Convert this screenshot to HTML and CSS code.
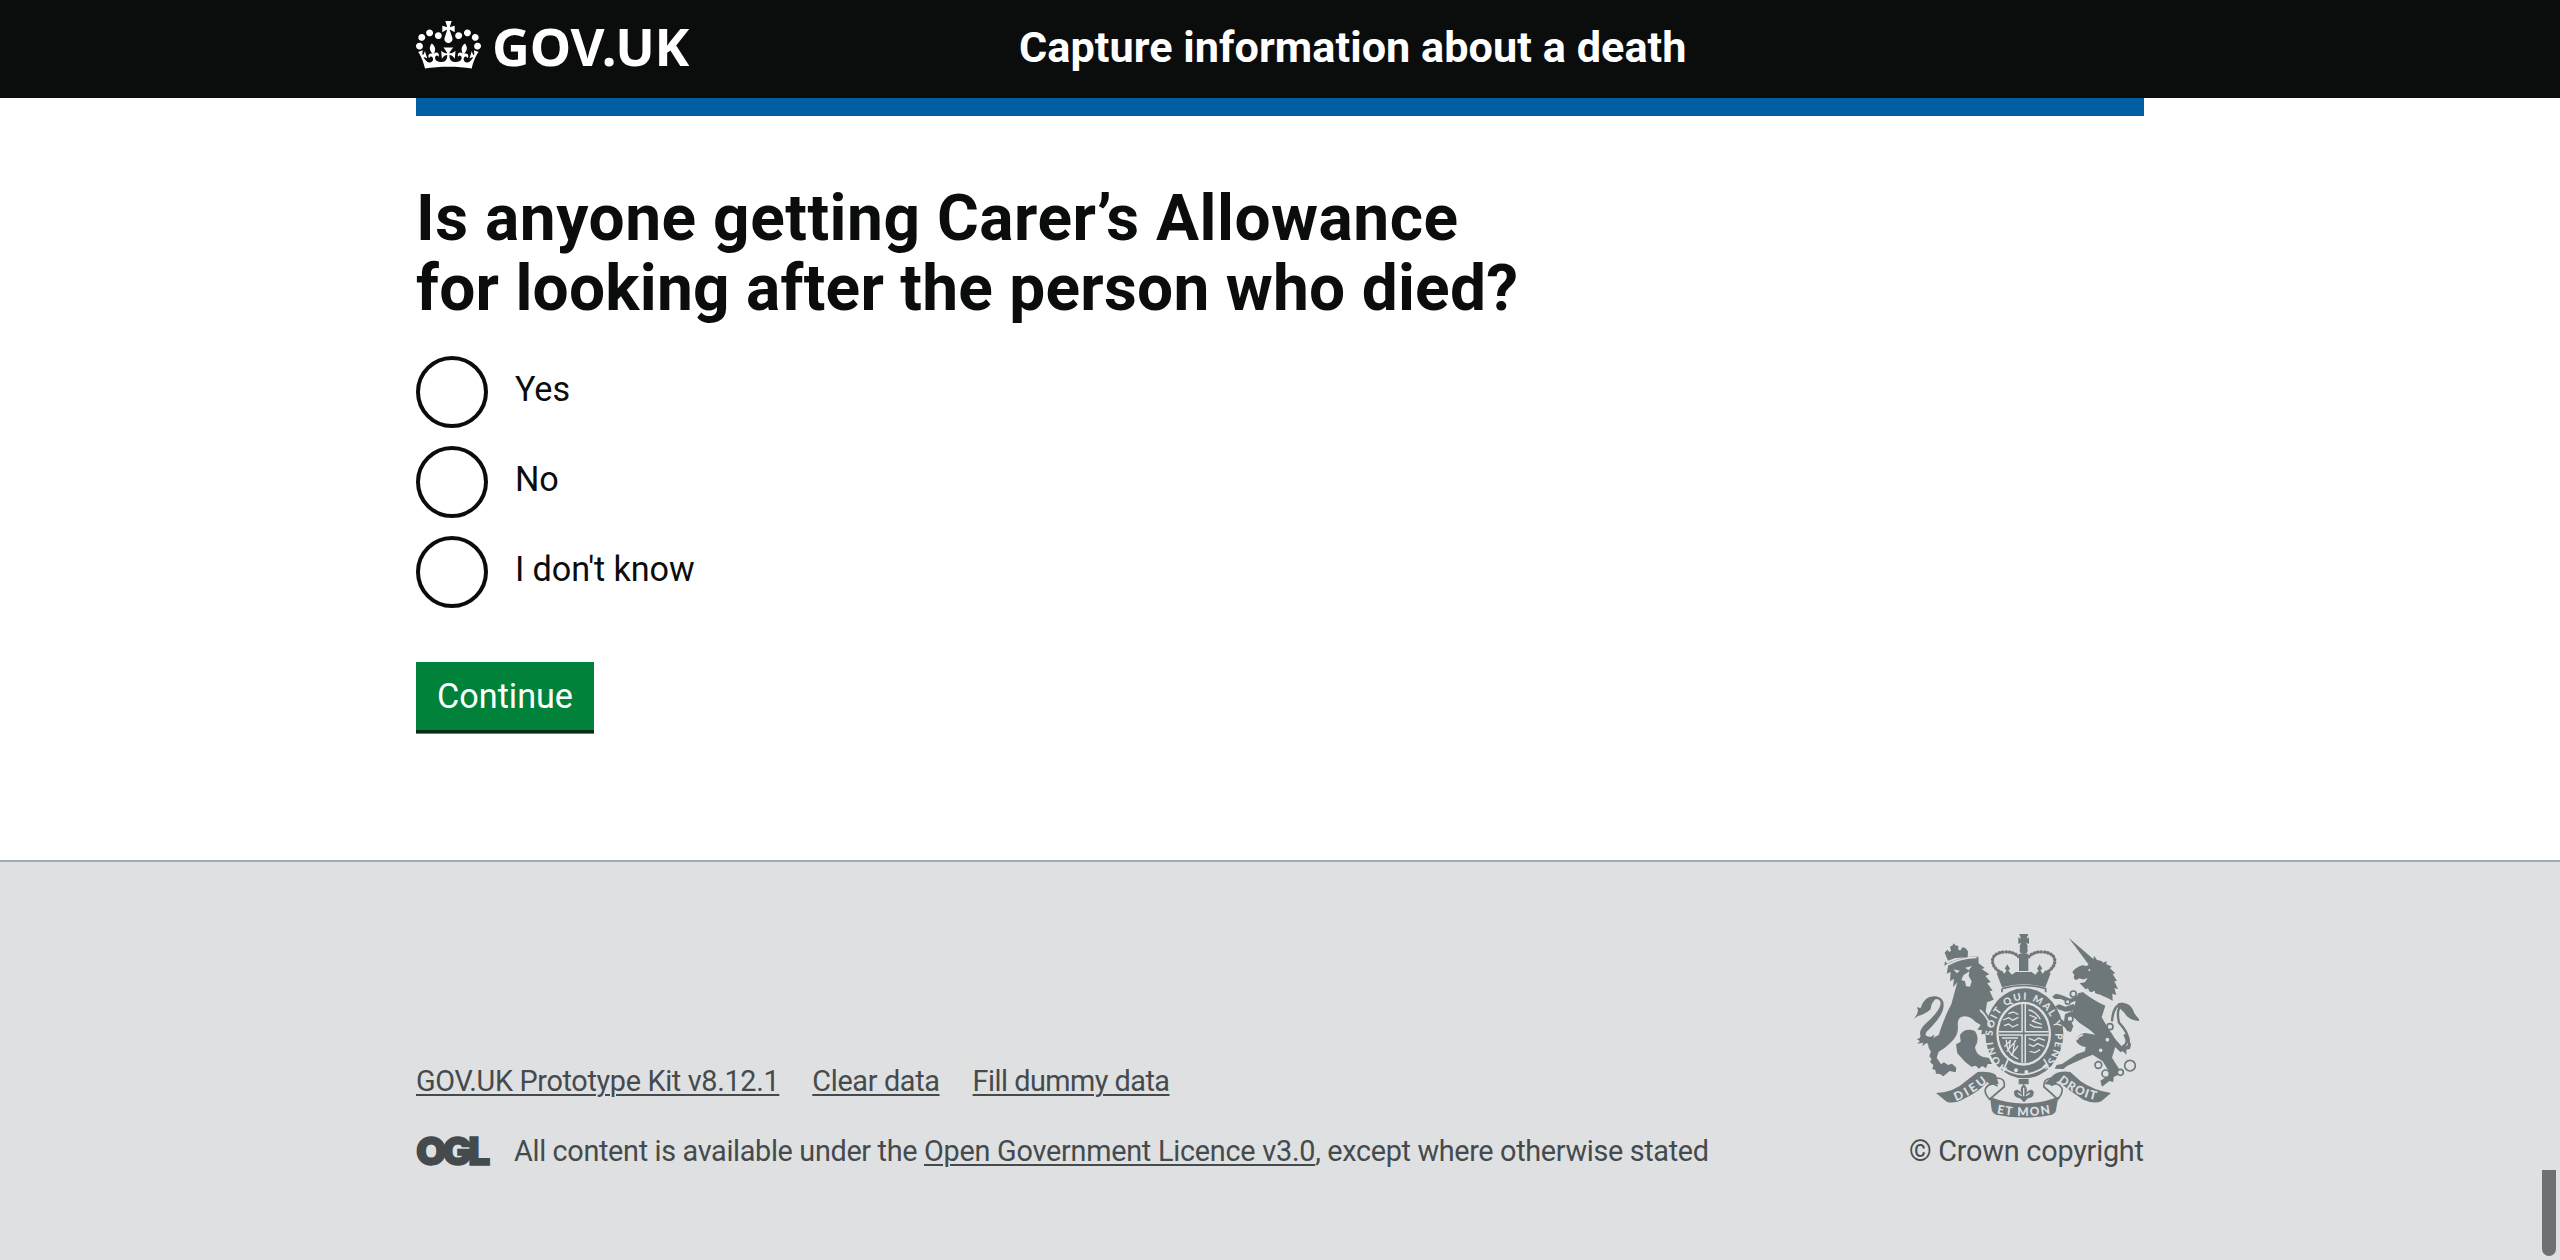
FILE: index.html
```
<!DOCTYPE html>
<html lang="en">
<head>
<meta charset="utf-8">
<title>Is anyone getting Carer’s Allowance for looking after the person who died?</title>
<link rel="stylesheet" href="styles.css">
</head>
<body>
<header class="header">
  <div class="container header-inner">
    <a class="logo" href="#">
      <svg class="crown" viewBox="0 0 132 97" aria-hidden="true"><path fill="currentColor" fill-rule="evenodd" d="M25 30.2c3.5 1.5 7.7-.2 9.1-3.7 1.5-3.6-.2-7.8-3.9-9.2-3.6-1.4-7.6.3-9.1 3.9-1.4 3.5.3 7.5 3.9 9zM9 39.5c3.6 1.5 7.8-.2 9.2-3.7 1.5-3.6-.2-7.8-3.9-9.1-3.6-1.5-7.6.2-9.1 3.8-1.4 3.5.3 7.5 3.8 9zM4.4 57.2c3.5 1.5 7.7-.2 9.1-3.8 1.5-3.6-.2-7.7-3.9-9.1-3.5-1.5-7.6.3-9.1 3.8-1.4 3.5.3 7.6 3.9 9.1zm38.3-21.4c3.5 1.5 7.7-.2 9.1-3.8 1.5-3.6-.2-7.7-3.9-9.1-3.6-1.5-7.6.3-9.1 3.8-1.3 3.6.4 7.7 3.9 9.1zm64.4-5.6c-3.6 1.5-7.8-.2-9.1-3.7-1.5-3.6.2-7.8 3.8-9.2 3.6-1.4 7.7.3 9.2 3.9 1.3 3.5-.4 7.5-3.9 9zm15.9 9.3c-3.6 1.5-7.7-.2-9.1-3.7-1.5-3.6.2-7.8 3.7-9.1 3.6-1.5 7.7.2 9.2 3.8 1.5 3.5-.3 7.5-3.8 9zm4.7 17.7c-3.6 1.5-7.8-.2-9.2-3.8-1.5-3.6.2-7.7 3.9-9.1 3.6-1.5 7.7.3 9.2 3.8 1.3 3.5-.4 7.6-3.9 9.1zM89.3 35.8c-3.6 1.5-7.8-.2-9.2-3.8-1.4-3.6.2-7.7 3.9-9.1 3.6-1.5 7.7.3 9.2 3.8 1.4 3.6-.3 7.7-3.9 9.1zM69.7 17.7l8.9 4.7V9.3l-8.9 2.8c-.2-.3-.5-.6-.9-.9L72.4 0H59.6l3.5 11.2c-.3.3-.6.5-.9.9l-8.8-2.8v13.1l8.8-4.7c.3.3.6.7.9.9l-5 15.4v.1c-.2.8-.4 1.6-.4 2.4 0 4.1 3.1 7.5 7 8.1h.2c.3 0 .7.1 1 .1.4 0 .7 0 1-.1h.2c4-.6 7.1-4.1 7.1-8.1 0-.8-.1-1.7-.4-2.4V34l-5.1-15.4c.4-.2.7-.6 1-.9zM66 92.8c16.9 0 32.8 1.1 47.1 3.2 4-16.9 8.9-26.7 14-33.5l-9.6-3.4c1 4.9 1.1 7.2 0 10.2-1.5-1.4-3-4.3-4.2-8.7L108.6 76c2.8-2 5-3.2 7.5-3.3-4.4 9.4-10 11.9-13.6 11.2-4.3-.8-6.3-4.6-5.6-7.9 1-4.7 5.7-5.9 8-.5 4.3-8.7-3-11.4-7.6-8.8 7.1-7.2 7.9-13.5 2.1-21.1-8 6.1-8.1 12.3-4.5 20.8-4.7-5.4-12.1-2.5-9.5 6.2 3.4-5.2 7.9-2 7.2 3.1-.6 4.3-6.4 7.8-13.5 7.2-10.3-.9-10.9-8-11.2-13.8 2.5-.5 7.1 1.8 11 7.3L80.2 60c-4.1 4.4-8 5.3-12.3 5.4 1.4-4.4 8-11.6 8-11.6H55.5s6.4 7.2 7.9 11.6c-4.2-.1-8-1-12.3-5.4l1.4 16.4c3.9-5.5 8.5-7.7 10.9-7.3-.3 5.8-.9 12.8-11.1 13.8-7.2.6-12.9-2.9-13.5-7.2-.7-5 3.8-8.3 7.1-3.1 2.7-8.7-4.6-11.6-9.4-6.2 3.7-8.5 3.6-14.7-4.6-20.8-5.8 7.6-5 13.9 2.2 21.1-4.7-2.6-11.9.1-7.7 8.8 2.3-5.5 7.1-4.2 8.1.5.7 3.3-1.3 7.1-5.7 7.9-3.5.7-9-1.8-13.5-11.2 2.5.1 4.7 1.3 7.5 3.3l-4.7-15.4c-1.2 4.4-2.7 7.2-4.3 8.7-1.1-3-.9-5.3 0-10.2l-9.5 3.4c5 6.9 9.9 16.7 14 33.5 14.8-2.1 30.8-3.2 47.7-3.2z"/></svg>
      <span class="logo-text">GOV.UK</span>
    </a>
    <a class="service" href="#">Capture information about a death</a>
  </div>
</header>
<div class="container bar"></div>
<main class="container main">
  <h1 class="heading">Is anyone getting Carer’s Allowance<br><span class="heading-rest">for looking after the person who died?</span></h1>
  <form class="form">
    <div class="radios">
      <label class="radio"><input class="radio-input" type="radio" name="carers"><span class="radio-label">Yes</span></label>
      <label class="radio"><input class="radio-input" type="radio" name="carers"><span class="radio-label">No</span></label>
      <label class="radio"><input class="radio-input" type="radio" name="carers"><span class="radio-label">I don't know</span></label>
    </div>
    <button class="button" type="button">Continue</button>
  </form>
</main>
<footer class="footer">
  <div class="container footer-inner">
    <div class="meta">
      <nav class="links">
        <a href="#">GOV.UK Prototype Kit v8.12.1</a>
        <a href="#">Clear data</a>
        <a class="tight" href="#">Fill dummy data</a>
      </nav>
      <div class="licence">
        <span class="ogl">OGL</span>
        <p class="licence-text">All content is available under the <a class="loose" href="#">Open Government Licence v3.0</a>, except where otherwise stated</p>
      </div>
    </div>
    <a class="copyright" href="#">
      <svg class="arms" viewBox="42 42 675 552" aria-hidden="true">
        <defs>
          <path id="motto" d="M324 446A94 111 0 1 1 424 443"/>
          <path id="dieu" d="M168 543Q215 526 266 483"/>
          <path id="mon" d="M290 580Q371 596 452 580"/>
          <path id="droit" d="M473 484Q525 528 590 541"/>
        </defs>
        <g class="ink">
          <!-- royal crown -->
          <path d="M358 42h27l-6 14 8-4v20l-8-4 5 14h-26l5-14-8 4V52l8 4z"/>
          <circle cx="371" cy="90" r="12"/>
          <path d="M357 101h28v52h-28z"/>
          <path d="M290 160l14-9 9 10 7-10-6-5 8-13 8 13-5 6 11 12 11-8h48l11 8 10-12-5-6 8-13 8 13-6 5 7 10 9-10 15 9-16 42q-66-18-130 0z"/>
          <path class="line dots" d="M304 158C268 140 266 98 314 96Q342 94 358 112"/>
          <path class="line dots" d="M438 158C474 140 476 98 428 96Q400 94 385 112"/>
          <path class="line" d="M306 206Q371 187 437 206v11M306 206v11"/>
          <!-- lion -->
          <path d="M144 122l-10-24 8-9 6 7 5-4-3-12 8-4 3-6 5 6 9 2 0 12 7 1 5-9 9 2 8 10-1 20q-32-6-59 8z"/>
          <path d="M133 137Q178 108 235 110l1 20 18 14-9 3 23 16-12 5 16 18-10 4 16 22-9 1 12 26-20 8-4 28 17 26 12 52-12-8-9 6-9-10-12 2 2-13-14-1 10-14-15-9q-16-18-34-17-19 1-20 23 4 26-11 45-24 27-46 38l-6 18 13 20 9-6 12 8 12-4 13 12-2 14-18-4-19 16-10-7-12-1-2-11-9-3 3-12-10-9 5-9-7-8 5-14-8-13q3-26 31-37 20-61 38-92l18-66-13 15 3-26-12 8 2-28-12 5 5-26-10-12z"/>
          <path d="M180 345q15-24 45-12 16 24 0 48 2 22 22 29l20 4 9 18-13 0-5 13-11-7-11 8-8-9-14 3-19-15-23-25-4-27 14-8z"/>
          <path d="M42 296q12-13 12-25l-3-9 11 2q11-38 45-35 25 4 24 28-1 30-50 77-12 15 10 17l12-7-5 20-12 14-5-10-15 11 4-11-18 3 8-8-10-5q14-3 11-13-5-15 18-36 40-36 43-58 0-14-15-14-14 12-15 31-18 16-38 20z"/>
          <!-- unicorn -->
          <path d="M506 53l78 68-17 14z"/>
          <path d="M560 138l19-15 3-16 9 13q16 2 18 8l11-4-1 9 17 7-7 4 17 16-8 2 13 21-8 0 11 25-11-4 6 21-12-4 1 21q-34-19-76-29l-23-23 16-3 8-14q-14 8-24 2l-11 5q-10-4-5-15l-6-9q10-14 29-20z"/>
          <path d="M534 220l20-5q28 27 62 42l-11 35 24 40q20 22 17 48l-10 33 20 32-4 21-11 5-1 15-12-3-22 17-5-18 19-12 6-17-18-29-30-20-25 10-51 23-12 10-26-1 6-11 16-3 45-30 24-8 2-13q-22-3-28-17 0-21 27-25l30 5-16-14-32-22-23-22z"/>
          <path d="M532 241l-22 8-28-12-17 0-9-7 12-9 16 4 27 11 20-8zM533 270l-36 5-23-7-8-9 11-6 19 7 24-8zM527 285l-19 8 12 26-7 17-11-3-8-11-26-19 1-22 8 11 15 12 3-21 21-10z"/>
          <path class="line tail" d="M636 304Q639 254 668 251 647 264 657 308 692 344 686 379M668 379q21-9 5-36"/>
          <path d="M654 250q37-8 49 30l14 18v5q-31-2-44-25-10-12-19-15zM640 350l24 28 15 0 15-9-4 18-11 2 0 15-10-10-8 2-18-17z"/>
          <ellipse cx="373" cy="340" rx="117" ry="135"/>
          <!-- fleur-de-lis -->
          <path d="M356 477h30v16h-30zM371 492q16 15 6 28 16-19 24-5 2 18-17 20l-12 12-12-12q-19-2-18-20 8-14 24 5-10-13 5-28z"/>
          <!-- ribbons -->
          <path d="M108 519q52 0 93-38l32-25q38-3 55 9l8 27-26 4-8-11q-23 29-70 51-30 17-52 9z"/>
          <path d="M633 519q-51-7-91-35l-31-28q-30-5-50 8l-28 28 26 4 15-12q39 32 76 55 35 15 55 4z"/>
          <path d="M270 531q101 39 205-1l-6 34q0 15-13 20-85 17-168 0-13-4-14-22z"/>
        </g>
        <path class="line" d="M289 474q29 0 23 27-17 14-43 37-18-19-12-33 13-22 36-7M455 474q-26 2-23 27 17 14 41 37 16-18 13-33-13-22-34-8"/>
        <!-- lion and unicorn details -->
        <g class="paper">
          <path d="M160 148l19 4-8 8zM196 143l20-5-10 13zM190 166l18-12-2 14 9 16-5 16-12-1-3-15-11-4z"/>
          <circle cx="568" cy="150" r="3"/>
        </g>
        <path class="cut" d="M540 205q32 30 78 49M548 204l4 10 11-6 6 17 13-10 4 20 15-9 2 20"/>
        <path class="cut" d="M144 134Q180 113 230 112"/>
        <path class="cut" d="M240 270q23 20 31 49M549 345q-15 4-18 14"/>
        <!-- garter -->
        <ellipse class="paper" cx="371" cy="341" rx="82" ry="96"/>
        <ellipse class="ink" cx="371" cy="341" rx="75" ry="89"/>
        <path class="cut wide" d="M371 252v176M297 340h149"/>
        <path class="line" d="M371 252v176M297 340h149"/>
        <path class="cut fine" d="M309 300l18-7 10 8 18-9M312 317l14-5 12 9 17-8M325 281l15-5 15 7M385 270q21 2 36 28M388 285l22 9-13 9 28 10M389 313l14 8 23 2M386 355l18 7 11-8 20 7M386 373l14 6 13-8 20 9M389 394l16 4 15-9M306 354h48M319 359q-1 42 36 58M331 360l-4 28M344 362l-6 42M313 380l20-20M320 395l28-34M333 407l21-30"/>
        <path class="cut" d="M304 440q63 48 135-2M324 418l-14 34M431 417l14 22"/>
        <g class="paper"><circle cx="348" cy="451" r="6"/><circle cx="379" cy="456" r="6"/></g>
        <path class="cut fine" d="M371 503v26M354 519l11 8M389 519l-11 8"/>
        <g class="rings">
          <circle cx="520" cy="222" r="9"/><circle cx="503" cy="245" r="7"/><circle cx="510" cy="296" r="9"/><circle cx="630" cy="320" r="9"/><circle cx="622" cy="359" r="8"/><circle cx="602" cy="391" r="8"/><circle cx="595" cy="435" r="10"/><circle cx="617" cy="461" r="11"/><circle cx="661" cy="457" r="9"/><circle cx="690" cy="437" r="16"/>
        </g>
        <g class="motto">
          <text><textPath href="#motto" textLength="535" lengthAdjust="spacing">HONI SOIT QUI MAL Y PENSE</textPath></text>
          <text class="scroll"><textPath href="#dieu" textLength="110">DIEU</textPath></text>
          <text class="scroll"><textPath href="#mon" textLength="162">ET MON</textPath></text>
          <text class="scroll"><textPath href="#droit" textLength="128">DROIT</textPath></text>
        </g>
      </svg>
      <span class="copyright-text">© Crown copyright</span>
    </a>
  </div>
</footer>
<div class="scroll-thumb"></div>
</body>
</html>
```
FILE: styles.css
```
* { box-sizing: border-box; }
body { margin: 0; height: 1260px; overflow: hidden; display: flex; flex-direction: column; background: #fff; color: #0b0c0c; font-family: Roboto, "Noto Sans", sans-serif; font-size: 34.2px; font-variant-ligatures: none; }
.container { width: 1728px; margin: 0 auto; }
.header { height: 98px; background: #0b0c0c; }
.header-inner { display: flex; align-items: flex-start; }
.header a { color: #fff; text-decoration: none; }
.logo { width: 603px; display: flex; padding-top: 21px; }
.crown { width: 65px; height: 48px; display: block; }
.logo-text { margin: -3px 0 0 11px; font: 700 52.4px/56px "Noto Sans", sans-serif; letter-spacing: -.2px; }
.service { padding-top: 23px; font-size: 43.2px; line-height: 50px; font-weight: 700; letter-spacing: .05px; white-space: nowrap; }
.bar { height: 18px; background: #005ea5; }
.main { height: 744px; padding-top: 68px; }
.heading { margin: 0 0 32px; font-size: 64px; line-height: 70px; font-weight: 700; letter-spacing: .52px; }
.heading-rest { letter-spacing: .25px; }
.radios { display: grid; gap: 18px; margin-bottom: 54px; }
.radio { display: flex; align-items: center; gap: 27px; height: 72px; }
.radio-input { appearance: none; width: 72px; height: 72px; margin: 0; border: 4px solid #0b0c0c; border-radius: 50%; background: #fff; }
.radio-label { padding-bottom: 7px; line-height: 44px; letter-spacing: -.1px; }
.button { display: block; width: 178px; height: 68px; padding: 0; border: 0; border-radius: 0; background: #00823b; box-shadow: 0 3.6px 0 #002d14; color: #fff; font: 400 34.2px/68px Roboto, "Noto Sans", sans-serif; text-align: center; }
.footer { flex: 1; border-top: 2px solid #a1acb2; background: #dee0e2; color: #454a4c; font-size: 28.8px; line-height: 36px; letter-spacing: -.33px; }
.footer a { color: inherit; }
.footer-inner { display: flex; justify-content: space-between; align-items: flex-end; padding-top: 72px; }
.links { display: flex; gap: 33px; margin-bottom: 34px; }
.links a, .licence-text a { text-decoration-thickness: 2px; text-underline-offset: 3px; }
.footer .tight { letter-spacing: -.5px; }
.footer .loose { letter-spacing: -.24px; }
.licence { display: flex; align-items: center; height: 36px; }
.ogl { width: 98px; font: 900 39px/36px Inter, sans-serif; letter-spacing: -3.7px; -webkit-text-stroke: 1.4px #454a4c; }
.licence-text { margin: 0; white-space: nowrap; }
.copyright { display: flex; flex-direction: column; width: 234px; text-decoration: none; }
.arms { width: 225px; height: 184px; margin: 0 0 15px 4px; display: block; }
.copyright-text { margin-left: -1px; white-space: nowrap; letter-spacing: -.22px; }
.ink { fill: #6e777a; }
.paper { fill: #dee0e2; }
.line { fill: none; stroke: #6e777a; stroke-width: 5; }
.tail { stroke-width: 7; }
.dots { stroke-width: 10; stroke-linecap: round; stroke-dasharray: 1 9; }
.cut { fill: none; stroke: #dee0e2; stroke-width: 5; stroke-linejoin: round; }
.cut.wide { stroke-width: 14; }
.cut.fine { stroke-width: 4; }
.rings { fill: #dee0e2; stroke: #6e777a; stroke-width: 5; }
.motto { fill: #dee0e2; font: 900 30px Lato, sans-serif; letter-spacing: 0; }
.scroll { font-size: 36px; }
.scroll-thumb { position: absolute; left: 2542px; top: 1170px; width: 14px; height: 86px; border-radius: 0 0 7px 7px; background: #6f7071; }
```
